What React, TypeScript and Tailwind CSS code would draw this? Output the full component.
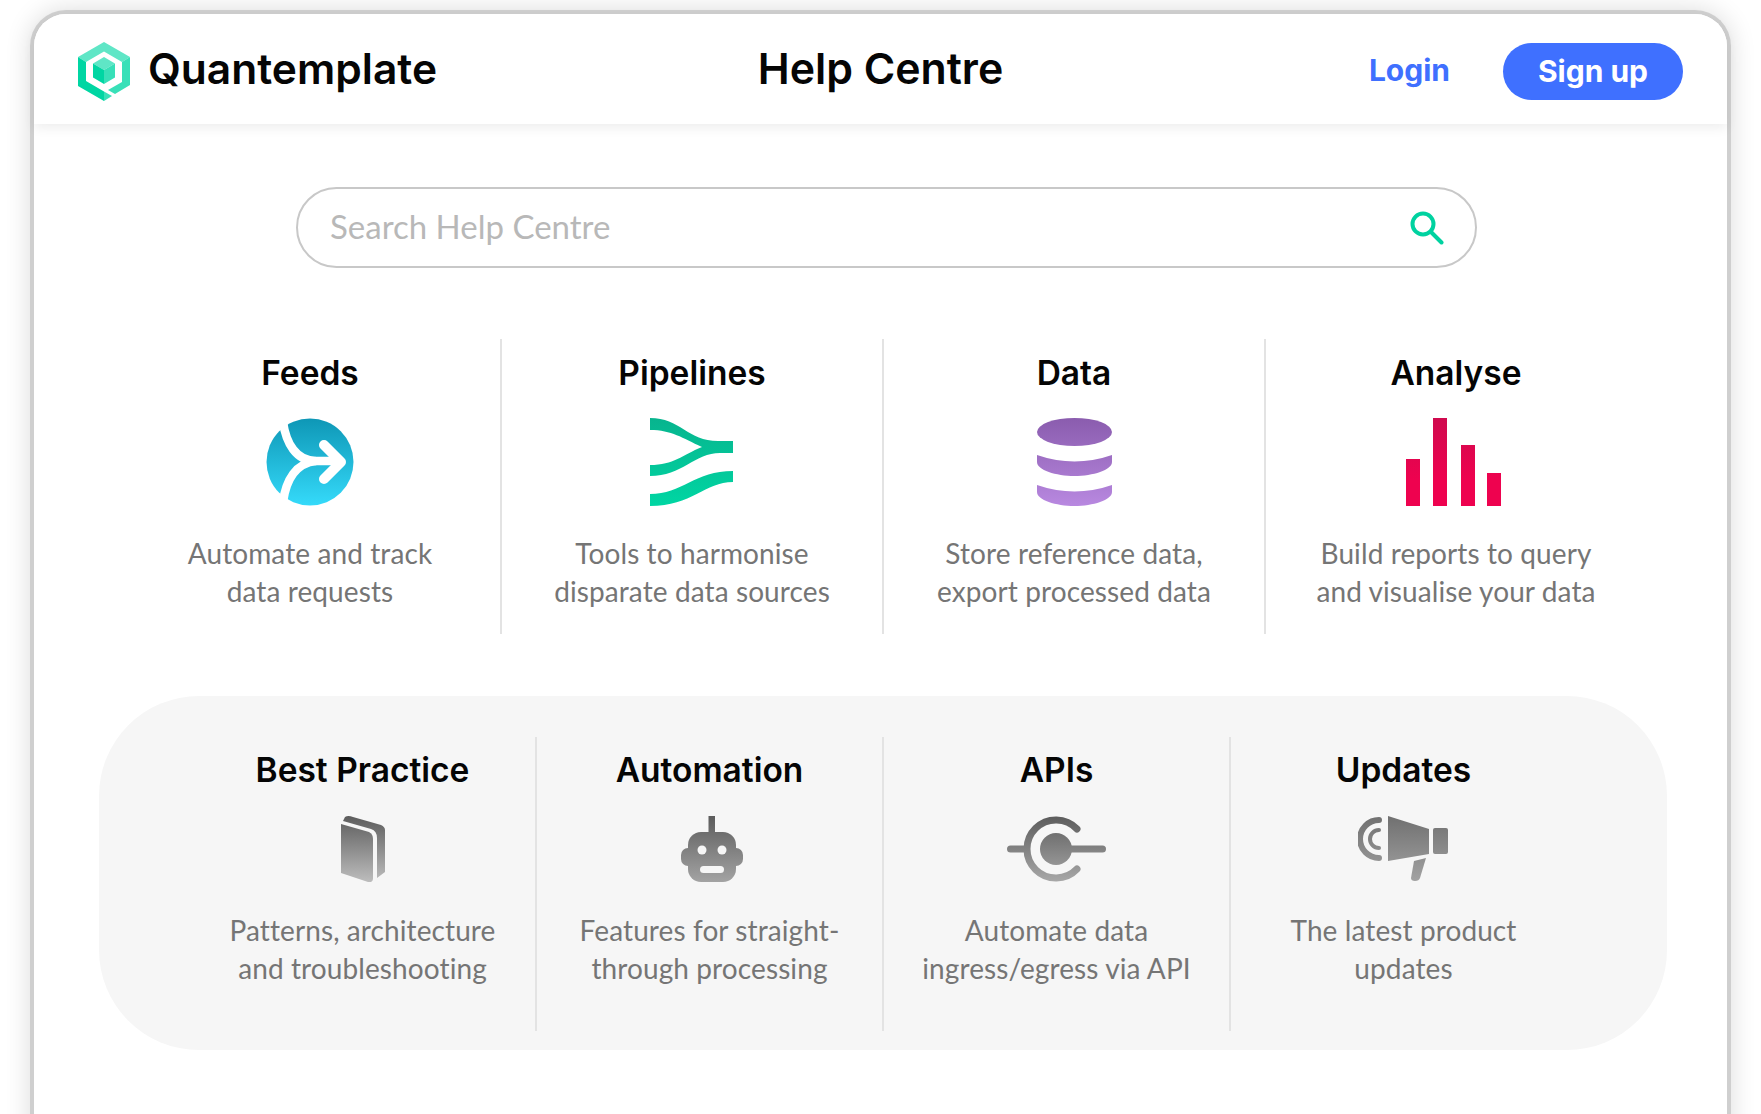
import React from "react";

const Grey = ({ id, h, from = "#5e5e5e", to = "#adadad" }: { id: string; h: number; from?: string; to?: string }) => (
  <defs>
    <linearGradient id={id} gradientUnits="userSpaceOnUse" x1="0" y1="0" x2="0" y2={h}>
      <stop offset="0" stopColor={from} />
      <stop offset="1" stopColor={to} />
    </linearGradient>
  </defs>
);

const Logo = () => (
  <svg width="52" height="59" viewBox="0 0 52 59" className="mt-[4px] shrink-0">
    <polygon points="26,0 52,15 44,20 26,9.500 8,20 0,15" fill="#5fe6c6" />
    <polygon points="0,15 8,20 8,39 26,49.500 26,59 0,44" fill="#00d6a3" />
    <polygon points="52,15 52,43 37,52 30,48 44,40 44,20" fill="#38e0b8" />
    <polygon points="26,49.500 34,54 26,59" fill="#38e0b8" />
    <polygon points="26,15 37,21.500 26,28 15,21.500" fill="#5fe6c6" />
    <polygon points="15,21.500 26,28 26,42 15,35.500" fill="#00d6a3" />
    <polygon points="37,21.500 26,28 26,42 37,35.500" fill="#38e0b8" />
  </svg>
);

const Feeds = () => (
  <svg width="88" height="88" viewBox="0 0 88 88">
    <defs>
      <linearGradient id="fg" x1="0" y1="0" x2="0" y2="1">
        <stop offset="0" stopColor="#0e97b6" />
        <stop offset="1" stopColor="#35dafa" />
      </linearGradient>
    </defs>
    <circle cx="44" cy="44" r="43.500" fill="url(#fg)" />
    <g fill="none" stroke="#fff" strokeWidth="8.500" strokeLinecap="round" strokeLinejoin="round">
      <path d="M17 4 C20 25 30 43 50 43 H74" strokeLinecap="butt" />
      <path d="M17 84 C20 62 30 45 50 43" strokeLinecap="butt" />
      <path d="M58 27 L75 44 L58 61" strokeWidth="10" />
    </g>
  </svg>
);

const Pipelines = () => (
  <svg width="83" height="88" viewBox="0 0 83 88" className="-translate-x-[1px]">
    <defs>
      <linearGradient id="pg" gradientUnits="userSpaceOnUse" x1="0" y1="0" x2="0" y2="88">
        <stop offset="0" stopColor="#07b48e" />
        <stop offset="1" stopColor="#00d6a3" />
      </linearGradient>
    </defs>
    <path d="M0 0 C30 0 38 23 68 23 H83 V35 H70 C45 35 32 58 0 58 V47 C24 47 32 37 52 29 C32 20 22 12 0 12 Z" fill="url(#pg)" />
    <path d="M0 76 C32 76 45 53 83 53 V64 C55 64 42 88 0 88 Z" fill="url(#pg)" />
  </svg>
);

const Data = () => (
  <svg width="75" height="88" viewBox="0 0 75 88">
    <defs>
      <linearGradient id="dg" gradientUnits="userSpaceOnUse" x1="0" y1="0" x2="0" y2="88">
        <stop offset="0" stopColor="#8a5cae" />
        <stop offset="1" stopColor="#b888e0" />
      </linearGradient>
    </defs>
    <ellipse cx="37.500" cy="14" rx="37.500" ry="14" fill="url(#dg)" />
    <path d="M0 37 Q37.500 50 75 37 V44 C75 52 56 58 37.500 58 C19 58 0 52 0 44 Z" fill="url(#dg)" />
    <path d="M0 67 Q37.500 80 75 67 V74 C75 82 56 88 37.500 88 C19 88 0 82 0 74 Z" fill="url(#dg)" />
  </svg>
);

const Analyse = () => (
  <svg width="95" height="88" viewBox="0 0 95 88" className="-translate-x-[3px]">
    <defs>
      <linearGradient id="ag" gradientUnits="userSpaceOnUse" x1="0" y1="0" x2="0" y2="88">
        <stop offset="0" stopColor="#cf0a4e" />
        <stop offset="0.7" stopColor="#ee024f" />
      </linearGradient>
    </defs>
    <g fill="url(#ag)">
      <rect x="0" y="41" width="14" height="47" />
      <rect x="27" y="0" width="14" height="88" />
      <rect x="55" y="27" width="14" height="61" />
      <rect x="81" y="55" width="14" height="33" />
    </g>
  </svg>
);

const Book = () => (
  <svg width="45" height="66" viewBox="0 0 45 66">
    <Grey id="bk" h={66} from="#5c5c5c" to="#bdbdbd" />
    <path d="M1 8 L29 16 Q33 18 33 23 V62 Q33 67 28 66 L1 57 Z" fill="url(#bk)" />
    <path d="M5 1 Q8 -1 13 1 L41 9 Q45 11 45 14 V56 L37 62 V22 Q37 15 31 13 L3 5 Z" fill="url(#bk)" />
  </svg>
);

const Robot = () => (
  <svg width="62" height="66" viewBox="0 0 62 66" className="translate-x-[2px]">
    <Grey id="rb" h={66} from="#5c5c5c" to="#a3a3a3" />
    <rect x="27.500" y="0" width="6.500" height="18" fill="url(#rb)" />
    <rect x="7" y="16" width="48" height="50" rx="13" fill="url(#rb)" />
    <rect x="0" y="32" width="62" height="18" rx="7" fill="url(#rb)" />
    <circle cx="21" cy="34" r="4.500" fill="#f6f6f6" />
    <circle cx="41" cy="34" r="4.500" fill="#f6f6f6" />
    <rect x="19" y="50" width="24" height="7" rx="3.500" fill="#f6f6f6" />
  </svg>
);

const Api = () => (
  <svg width="99" height="66" viewBox="0 0 99 66">
    <Grey id="ap" h={66} from="#5c5c5c" to="#a8a8a8" />
    <circle cx="49" cy="33" r="16" fill="url(#ap)" />
    <g fill="none" stroke="url(#ap)" strokeWidth="7" strokeLinecap="round">
      <path d="M3.500 33 H19" />
      <path d="M50 33 H95.500" />
      <path d="M70 13 A29 29 0 1 0 70 53" />
    </g>
  </svg>
);

const Horn = () => (
  <svg width="90" height="66" viewBox="0 0 90 66" className="-translate-x-[1px]">
    <Grey id="hn" h={66} from="#707070" to="#a3a3a3" />
    <g fill="none" stroke="url(#hn)" strokeLinecap="round">
      <path d="M21 4 A19 19 0 0 0 21 42" strokeWidth="6" />
      <path d="M21 14 A9 9 0 0 0 21 32" strokeWidth="4" />
    </g>
    <g fill="url(#hn)">
      <polygon points="30,0 71,13 71,38 30,45" />
      <rect x="75" y="12" width="15" height="26" rx="2" />
      <path d="M56 45 L68 42 L62 62 Q61 65 57 65 Q53 65 53 62 Z" />
    </g>
  </svg>
);

const top = [
  { t: "Feeds", I: Feeds, a: "Automate and track", b: "data requests" },
  { t: "Pipelines", I: Pipelines, a: "Tools to harmonise", b: "disparate data sources" },
  { t: "Data", I: Data, a: "Store reference data,", b: "export processed data" },
  { t: "Analyse", I: Analyse, a: "Build reports to query", b: "and visualise your data" },
];
const bottom = [
  { t: "Best Practice", I: Book, a: "Patterns, architecture", b: "and troubleshooting" },
  { t: "Automation", I: Robot, a: "Features for straight-", b: "through processing" },
  { t: "APIs", I: Api, a: "Automate data", b: "ingress/egress via API" },
  { t: "Updates", I: Horn, a: "The latest product", b: "updates" },
];

export default function App() {
  return (
    <div className="h-[1114px] overflow-hidden bg-white font-['Lato',sans-serif]">
      <div className="mt-[10px] ml-[30px] h-[1200px] w-[1701px] rounded-t-[36px] border-4 border-b-0 border-[#cfcfcf] bg-white shadow-[0_0_26px_rgba(0,0,0,0.14)]">
        <header className="grid h-[110px] grid-cols-3 items-center rounded-t-[32px] bg-white pl-[44px] pr-[44px] shadow-[0_4px_12px_rgba(0,0,0,0.07)]">
          <div className="flex items-center gap-[18px]">
            <Logo />
            <span className="font-['Inter',sans-serif] text-[42.500px] font-semibold text-[#050505]">Quantemplate</span>
          </div>
          <h1 className="text-center font-['Inter',sans-serif] text-[42.800px] font-semibold text-[#050505]">Help Centre</h1>
          <div className="mt-[5px] flex items-center justify-end gap-[53px]">
            <a className="-mt-[3px] font-['Inter',sans-serif] text-[30px] font-bold text-[#3f70ff]">Login</a>
            <button className="h-[57px] w-[180px] rounded-full bg-[#3f70ff] font-['Inter',sans-serif] text-[30px] font-bold text-white">Sign up</button>
          </div>
        </header>

        <div className="mt-[63px] ml-[262px] flex h-[81px] w-[1181px] items-center rounded-full border-2 border-[#c8c8c8] pr-[31px] pl-[32px]">
          <input
            readOnly
            placeholder="Search Help Centre"
            className="-mt-[2px] min-w-0 flex-1 bg-transparent text-[33px] outline-none placeholder:text-[#b8b8b8]"
          />
          <svg width="34" height="34" viewBox="0 0 34 34" fill="none" stroke="#00d2a0" strokeWidth="4">
            <circle cx="13" cy="13" r="10.500" />
            <path d="M20.500 20.500 L31.500 31.500" strokeLinecap="round" />
          </svg>
        </div>

        <section className="mt-[71px] ml-[86px] grid h-[295px] w-[1528px] grid-cols-4">
          {top.map(({ t, I, a, b }, i) => (
            <div key={t} className={`flex flex-col items-center border-r-2 pt-[14px] ${i < 3 ? "border-[#e3e3e3]" : "border-transparent"}`}>
              <h2 className="h-[40px] font-['Inter',sans-serif] text-[33.500px] leading-[40px] font-semibold text-[#050505]">{t}</h2>
              <div className="mt-[25px] h-[88px]"><I /></div>
              <p className="mt-[28px] text-center text-[28px] leading-[38px] tracking-[0.1px] text-[#757575]">{a}<br />{b}</p>
            </div>
          ))}
        </section>

        <section className="mt-[62px] ml-[65px] h-[354px] w-[1568px] rounded-[100px] bg-[#f6f6f6] pt-[41px] pl-[91px]">
          <div className="grid h-[294px] w-[1388px] grid-cols-4">
            {bottom.map(({ t, I, a, b }, i) => (
              <div key={t} className={`flex flex-col items-center border-r-2 pt-[13px] ${i < 3 ? "border-[#e3e3e3]" : "border-transparent"}`}>
                <h2 className="h-[40px] font-['Inter',sans-serif] text-[33.500px] leading-[40px] font-semibold text-[#050505]">{t}</h2>
                <div className="mt-[26px] h-[66px]"><I /></div>
                <p className="mt-[29px] text-center text-[28px] leading-[38px] tracking-[0.1px] text-[#757575]">{a}<br />{b}</p>
              </div>
            ))}
          </div>
        </section>
      </div>
    </div>
  );
}
